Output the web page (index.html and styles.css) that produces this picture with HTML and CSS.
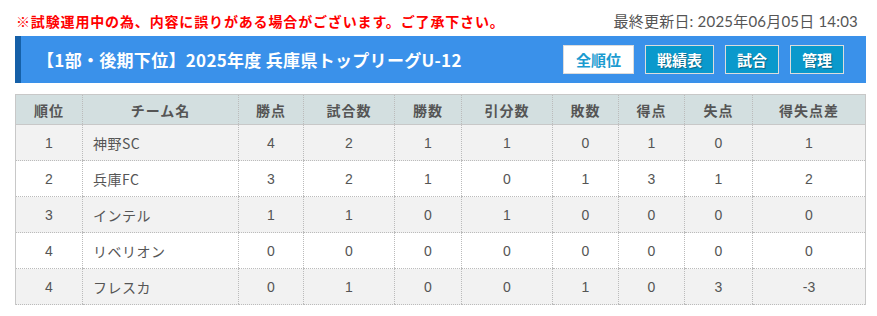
FILE: index.html
```html
<!DOCTYPE html>
<html lang="ja">
<head>
<meta charset="utf-8">
<link rel="stylesheet" href="styles.css">
</head>
<body>
<div class="page">
  <div class="topline">
    <p class="notice">※試験運用中の為、内容に誤りがある場合がございます。ご了承下さい。</p>
    <p class="updated">最終更新日: 2025年06月05日 14:03</p>
  </div>
  <div class="titlebar">
    <h1 class="title">【1部・後期下位】2025年度 兵庫県トップリーグU-12</h1>
    <div class="buttons">
      <a class="btn btn-active">全順位</a>
      <a class="btn">戦績表</a>
      <a class="btn">試合</a>
      <a class="btn">管理</a>
    </div>
  </div>
  <table class="standings">
    <colgroup>
      <col style="width:67px"><col style="width:156px"><col style="width:65px"><col style="width:91px"><col style="width:67px"><col style="width:91px"><col style="width:66px"><col style="width:66px"><col style="width:68px"><col>
    </colgroup>
    <thead>
      <tr><th>順位</th><th>チーム名</th><th>勝点</th><th>試合数</th><th>勝数</th><th>引分数</th><th>敗数</th><th>得点</th><th>失点</th><th>得失点差</th></tr>
    </thead>
    <tbody>
      <tr><td>1</td><td class="team">神野SC</td><td>4</td><td>2</td><td>1</td><td>1</td><td>0</td><td>1</td><td>0</td><td>1</td></tr>
      <tr><td>2</td><td class="team">兵庫FC</td><td>3</td><td>2</td><td>1</td><td>0</td><td>1</td><td>3</td><td>1</td><td>2</td></tr>
      <tr><td>3</td><td class="team">インテル</td><td>1</td><td>1</td><td>0</td><td>1</td><td>0</td><td>0</td><td>0</td><td>0</td></tr>
      <tr><td>4</td><td class="team">リベリオン</td><td>0</td><td>0</td><td>0</td><td>0</td><td>0</td><td>0</td><td>0</td><td>0</td></tr>
      <tr><td>4</td><td class="team">フレスカ</td><td>0</td><td>1</td><td>0</td><td>0</td><td>1</td><td>0</td><td>3</td><td>-3</td></tr>
    </tbody>
  </table>
</div>
</body>
</html>
```

FILE: styles.css
```css
* { box-sizing: border-box; }
html, body { margin: 0; padding: 0; background: #fff; }
body {
  font-family: "Liberation Sans", Arial, "Noto Sans CJK JP", sans-serif;
  color: #555;
}
.page {
  width: 851px;
  margin-left: 15px;
  padding-top: 10px;
}
.topline {
  display: flex;
  justify-content: space-between;
  align-items: center;
  height: 21px;
  margin-bottom: 5px;
}
.notice {
  margin: 0 0 0 1px;
  color: #f00;
  font-weight: bold;
  font-size: 14px;
  font-family: "Noto Sans CJK JP", sans-serif;
  letter-spacing: 0.85px;
}
.updated {
  margin: 0 8px 0 0;
  font-size: 15px;
  color: #555;
  font-family: Lato, "Noto Sans CJK JP", sans-serif;
  letter-spacing: 0.2px;
}
.titlebar {
  display: flex;
  align-items: center;
  justify-content: space-between;
  height: 47px;
  background: #3a91ea;
  border-left: 6px solid #1560a8;
  padding: 0 22px 0 16px;
}
.title {
  margin: 0;
  color: #fff;
  font-size: 17px;
  font-weight: bold;
  font-family: "Noto Sans CJK JP", sans-serif;
  letter-spacing: 0.3px;
}
.buttons {
  display: flex;
  gap: 11px;
}
.btn {
  display: flex;
  align-items: center;
  justify-content: center;
  height: 29px;
  padding: 0 11px;
  background: #0a99cc;
  border: 1px solid #dcdcdc;
  color: #fff;
  font-size: 15px;
  font-weight: bold;
  font-family: "Noto Sans CJK JP", sans-serif;
  text-shadow: 1px 1px 1px rgba(0,0,0,0.35);
}
.btn-active {
  background: #fff;
  color: #1a9bd0;
  padding: 0 12px;
  text-shadow: none;
}
.standings {
  width: 851px;
  margin-top: 11px;
  border-collapse: collapse;
  table-layout: fixed;
  border-top: 1px solid #c8c8c8;
  border-left: 1px solid #c8c8c8;
  border-right: 1px solid #c8c8c8;
  font-size: 14px;
}
.standings th {
  height: 30px;
  background: #d3dfe0;
  color: #555;
  font-weight: bold;
  font-family: "Noto Sans CJK JP", sans-serif;
  font-size: 14px;
  text-align: center;
  border-left: 1px dotted #bbb;
  border-bottom: 1px solid #c8c8c8;
  padding: 0;
  letter-spacing: 1px;
}
.standings td {
  height: 36px;
  text-align: center;
  color: #555;
  border-left: 1px dotted #bbb;
  border-bottom: 1px dotted #bbb;
  padding: 0;
}
.standings tbody tr:nth-child(odd) td { background: #f2f2f2; }
.standings tbody tr:nth-child(even) td { background: #fff; }
.standings td.team {
  text-align: left;
  padding-left: 10px;
  font-family: "Noto Sans CJK JP", sans-serif;
  letter-spacing: 0.5px;
}
```
